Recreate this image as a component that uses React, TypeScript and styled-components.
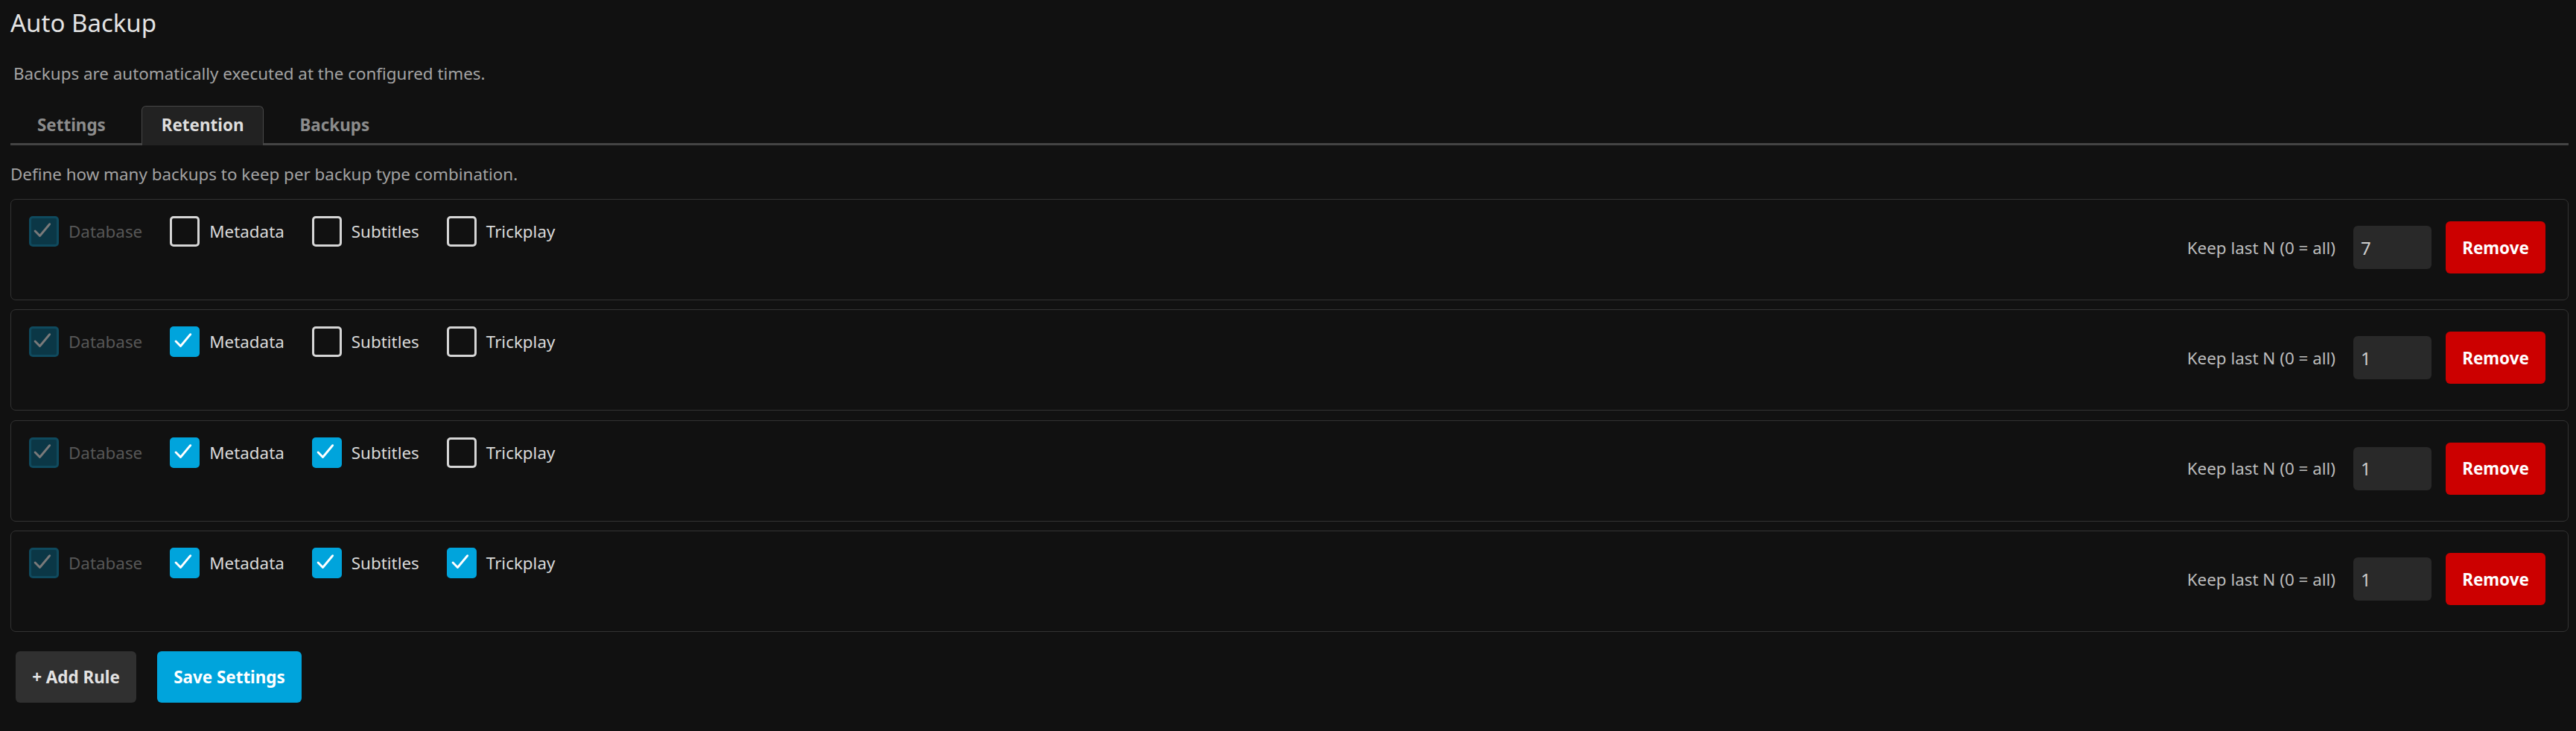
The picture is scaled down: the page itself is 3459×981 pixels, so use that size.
import React from 'react';
import styled, { createGlobalStyle } from 'styled-components';

const GlobalStyle = createGlobalStyle`
  html, body {
    margin: 0;
    padding: 0;
    background: #111111;
  }
  body {
    font-family: "Noto Sans", "Open Sans", sans-serif;
    color: #dddddd;
  }
`;

const Page = styled.div`
  padding: 12px 10px 30px 14px;
`;

const Title = styled.h2`
  margin: 0;
  font-size: 33px;
  line-height: 38px;
  font-weight: 400;
  color: #e3e3e3;
`;

const Description = styled.p<{ $indent?: number; $top: number }>`
  margin: ${(p) => p.$top}px 0 0 ${(p) => p.$indent ?? 0}px;
  font-size: 22.4px;
  line-height: 30px;
  color: #a3a3a3;
`;

const TabList = styled.div`
  display: flex;
  gap: 21px;
  margin-top: 28px;
  padding-left: 9px;
  border-bottom: 3px solid #444444;
  height: 50px;
`;

const Tab = styled.button<{ $active?: boolean }>`
  height: 53px;
  padding: 0 26px 3px;
  margin-bottom: -3px;
  font-family: inherit;
  font-size: 22.4px;
  font-weight: 700;
  color: ${(p) => (p.$active ? '#dedede' : '#8c8c8c')};
  background: ${(p) => (p.$active ? '#222222' : 'transparent')};
  border: 1px solid ${(p) => (p.$active ? '#474747' : 'transparent')};
  border-bottom: none;
  border-radius: 6px 6px 0 0;
  cursor: pointer;
`;

const RuleList = styled.div`
  display: flex;
  flex-direction: column;
  gap: 12.4px;
  margin-top: 18px;
`;

const RuleCard = styled.div`
  box-sizing: border-box;
  height: 136px;
  display: flex;
  align-items: center;
  padding: 22px 30px 28px 24px;
  border: 1px solid #333333;
  border-radius: 7px;
  background: #111111;
`;

const TypeRow = styled.div`
  display: flex;
  align-items: center;
  gap: 37px;
  align-self: flex-start;
`;

const CheckItem = styled.label<{ $disabled?: boolean }>`
  display: flex;
  align-items: center;
  gap: 13px;
  font-size: 22.4px;
  color: ${(p) => (p.$disabled ? '#575757' : '#dadada')};
`;

const Box = styled.span<{ $checked?: boolean; $disabled?: boolean }>`
  box-sizing: border-box;
  width: 40px;
  height: 41px;
  display: flex;
  align-items: center;
  justify-content: center;
  border-radius: 5px;
  border: 3px solid
    ${(p) => (p.$disabled ? '#0f4a5e' : p.$checked ? '#00a4dc' : '#d6d6d6')};
  background: ${(p) => (p.$disabled ? '#0b3746' : p.$checked ? '#00a4dc' : 'transparent')};
  color: ${(p) => (p.$disabled ? '#7a7a7a' : '#ffffff')};
`;

const Spacer = styled.div`
  flex: 1;
`;

const KeepGroup = styled.div`
  display: flex;
  align-items: center;
`;

const KeepLabel = styled.span`
  font-size: 22.4px;
  color: #bdbdbd;
  margin-right: 24px;
`;

const CountInput = styled.input`
  box-sizing: border-box;
  width: 105px;
  height: 58px;
  padding: 0 10px;
  border: none;
  border-radius: 6px;
  background: #292929;
  color: #cfcfcf;
  font-family: inherit;
  font-size: 24px;
  outline: none;
  margin-right: 19px;
`;

const ActionButton = styled.button<{ $tone: 'danger' | 'neutral' | 'primary'; $width: number }>`
  box-sizing: border-box;
  width: ${(p) => p.$width}px;
  height: ${(p) => (p.$tone === 'danger' ? 70 : 69)}px;
  border: none;
  border-radius: 6px;
  font-family: inherit;
  font-size: 22.4px;
  font-weight: 700;
  cursor: pointer;
  color: ${(p) => (p.$tone === 'neutral' ? '#e2e2e2' : '#ffffff')};
  background: ${(p) =>
    p.$tone === 'danger' ? '#cc0000' : p.$tone === 'primary' ? '#00a4dc' : '#303030'};
`;

const Footer = styled.div`
  display: flex;
  gap: 28px;
  margin-top: 26px;
  padding-left: 7px;
`;

const Check = () => (
  <svg width="40" height="41" viewBox="0 0 40 41" fill="none">
    <path d="M6 20 L13.5 27.5 L29 9" stroke="currentColor" strokeWidth="3.4" strokeLinecap="round" strokeLinejoin="round" />
  </svg>
);

type Rule = { metadata: boolean; subtitles: boolean; trickplay: boolean; keep: string };

const rules: Rule[] = [
  { metadata: false, subtitles: false, trickplay: false, keep: '7' },
  { metadata: true, subtitles: false, trickplay: false, keep: '1' },
  { metadata: true, subtitles: true, trickplay: false, keep: '1' },
  { metadata: true, subtitles: true, trickplay: true, keep: '1' },
];

function TypeCheck({ label, checked, disabled }: { label: string; checked: boolean; disabled?: boolean }) {
  return (
    <CheckItem $disabled={disabled}>
      <Box $checked={checked} $disabled={disabled}>
        {checked && <Check />}
      </Box>
      {label}
    </CheckItem>
  );
}

export default function App() {
  return (
    <Page>
      <GlobalStyle />
      <Title>Auto Backup</Title>
      <Description $top={34} $indent={4}>
        Backups are automatically executed at the configured times.
      </Description>
      <TabList>
        <Tab>Settings</Tab>
        <Tab $active>Retention</Tab>
        <Tab>Backups</Tab>
      </TabList>
      <Description $top={24}>Define how many backups to keep per backup type combination.</Description>
      <RuleList>
        {rules.map((r, i) => (
          <RuleCard key={i}>
            <TypeRow>
              <TypeCheck label="Database" checked disabled />
              <TypeCheck label="Metadata" checked={r.metadata} />
              <TypeCheck label="Subtitles" checked={r.subtitles} />
              <TypeCheck label="Trickplay" checked={r.trickplay} />
            </TypeRow>
            <Spacer />
            <KeepGroup>
              <KeepLabel>Keep last N (0 = all)</KeepLabel>
              <CountInput defaultValue={r.keep} />
              <ActionButton $tone="danger" $width={134}>Remove</ActionButton>
            </KeepGroup>
          </RuleCard>
        ))}
      </RuleList>
      <Footer>
        <ActionButton $tone="neutral" $width={162}>+ Add Rule</ActionButton>
        <ActionButton $tone="primary" $width={194}>Save Settings</ActionButton>
      </Footer>
    </Page>
  );
}
